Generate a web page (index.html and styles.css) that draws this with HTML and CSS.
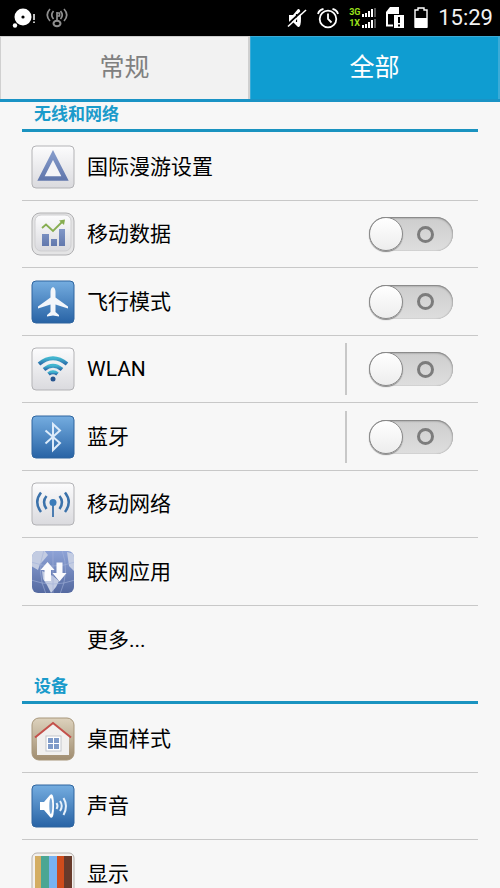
FILE: index.html
```html
<!DOCTYPE html>
<html lang="zh-CN">

<head>
  <meta charset="utf-8">
  <meta name="viewport" content="width=device-width, initial-scale=1">
  <title>设置</title>
  <link rel="stylesheet" href="styles.css">
</head>

<body>
  <!-- shared gradients -->
  <svg class="defs" width="0" height="0" aria-hidden="true">
    <defs>
      <linearGradient id="light" x1="0" y1="0" x2="0" y2="1">
        <stop offset="0" stop-color="#fcfcfd" />
        <stop offset="1" stop-color="#dadade" />
      </linearGradient>
      <linearGradient id="blue" x1="0" y1="0" x2="0" y2="1">
        <stop offset="0" stop-color="#75ade0" />
        <stop offset="1" stop-color="#2863a5" />
      </linearGradient>
      <linearGradient id="slate" x1="0" y1="0" x2="0" y2="1">
        <stop offset="0" stop-color="#8298c8" />
        <stop offset="1" stop-color="#6278ad" />
      </linearGradient>
      <linearGradient id="wave" x1="0" y1="0" x2="0" y2="1">
        <stop offset="0" stop-color="#42b5cf" />
        <stop offset="1" stop-color="#2c6fac" />
      </linearGradient>
      <linearGradient id="sand" x1="0" y1="0" x2="0" y2="1">
        <stop offset="0" stop-color="#ddd2bd" />
        <stop offset="1" stop-color="#a08d70" />
      </linearGradient>
      <linearGradient id="globe" x1="0" y1="0" x2="0" y2="1">
        <stop offset="0" stop-color="#8fa4d8" />
        <stop offset="1" stop-color="#53689f" />
      </linearGradient>
      <clipPath id="tile"><rect x="1" y="1" width="42" height="42" rx="6" /></clipPath>
    </defs>
  </svg>

  <div class="screen">
    <header class="status">
      <div class="status-group">
        <svg width="24" height="22" viewBox="0 0 24 22">
          <circle cx="11" cy="10" r="8.500" fill="#fff" />
          <circle cx="11" cy="10" r="1.600" fill="#000" />
          <circle cx="3" cy="18.500" r="2.200" fill="#fff" />
          <path d="M22 7V13M22 14.500V16" stroke="#fff" stroke-width="1.500" />
        </svg>
        <svg width="22" height="22" viewBox="0 0 22 22" fill="none" stroke="#8f8f8f" stroke-width="1.700">
          <path d="M4 2Q-1.500 8 4 14M7.500 4Q4 8 7.500 12M18 2Q23.500 8 18 14M14.500 4Q18 8 14.500 12" />
          <path d="M11 13.500V5M11 6H13.500V9H11" />
          <ellipse cx="11" cy="16.500" rx="3.500" ry="2.800" stroke-width="2" />
        </svg>
      </div>
      <div class="status-group">
        <svg width="20" height="22" viewBox="0 0 20 22">
          <path d="M2 8H6L11 2Q14 1 14 11Q14 21 11 20L6 15H2Z" fill="#fff" />
          <path d="M9.500 7V15" stroke="#000" stroke-width="1.200" />
          <path d="M0 18L17.500 2" stroke="#000" stroke-width="2" />
          <path d="M1 19.500L19 3" stroke="#fff" stroke-width="1.600" />
        </svg>
        <svg width="22" height="22" viewBox="0 0 22 22" fill="none" stroke="#fff" stroke-width="1.800">
          <circle cx="11" cy="12" r="8.300" />
          <path d="M11 6.500V12L14.500 15.500M1 7Q2 3 6.500 2M21 7Q20 3 15.500 2" />
        </svg>
        <div class="signal">
          <span>3G</span>
          <svg width="14" height="9" viewBox="0 0 14 9">
            <path d="M0 6H2V9H0ZM3 5H5V9H3ZM6 3H8V9H6ZM9 1H11V9H9Z" fill="#fff" />
            <path d="M12 0H14V9H12Z" fill="#555" />
          </svg>
          <span>1X</span>
          <svg width="14" height="9" viewBox="0 0 14 9">
            <path d="M0 6H2V9H0ZM3 5H5V9H3ZM6 3H8V9H6ZM9 1H11V9H9Z" fill="#fff" />
            <path d="M12 0H14V9H12Z" fill="#555" />
          </svg>
        </div>
        <svg width="18" height="22" viewBox="0 0 18 22">
          <path d="M7 18.500H1V5" fill="none" stroke="#fff" stroke-width="2" />
          <path d="M0 5L4 0H13V7H0Z" fill="#fff" />
          <rect x="8" y="8" width="10" height="13" fill="#fff" />
          <path d="M13 10V16M13 17.500V19.500" stroke="#000" stroke-width="2" />
        </svg>
        <svg width="14" height="22" viewBox="0 0 14 22">
          <path d="M1 20V3H4V1H10V3H13V20Z" fill="none" stroke="#fff" stroke-width="1.400" />
          <rect x="1" y="11" width="12" height="10" fill="#fff" />
        </svg>
        <time class="clock">15:29</time>
      </div>
    </header>

    <nav class="tabs">
      <button type="button" class="tab">常规</button>
      <button type="button" class="tab active">全部</button>
    </nav>

    <main class="settings">
      <section>
        <h2>无线和网络</h2>
        <ul>
          <li>
            <svg class="icon" viewBox="0 0 44 44">
              <rect x="1" y="1" width="42" height="42" rx="4" fill="url(#light)" stroke="#b3b3b6" />
              <path d="M22 10L34 33.500H10Z" fill="#f4f4f7" stroke="url(#slate)" stroke-width="4.500" />
            </svg>
            <span class="label">国际漫游设置</span>
          </li>
          <li>
            <svg class="icon" viewBox="0 0 44 44">
              <rect x="1" y="1" width="42" height="42" rx="8" fill="#e4e4e5" stroke="#b0b0b2" />
              <rect x="4" y="3" width="36" height="36" rx="6" fill="url(#light)" stroke="#cfcfd1" />
              <path d="M11 22H18V34H11ZM20 27H26V34H20ZM28 17H34V34H28Z" fill="url(#slate)" />
              <path d="M11 16L15 12.500L22 19L31 10" fill="none" stroke="#86ad50" stroke-width="1.800" />
              <path d="M28 8.500L34 7.500L33 13Z" fill="#86ad50" />
            </svg>
            <label class="label" for="data">移动数据</label>
            <input type="checkbox" class="switch" id="data">
          </li>
          <li>
            <svg class="icon" viewBox="0 0 44 44">
              <rect x="1" y="1" width="42" height="42" rx="4" fill="url(#blue)" stroke="#2f659f" />
              <path d="M22 7Q24.500 8 24.500 12V17.500L37 26.500V28.500L24.500 24.500V32L28 35V36.500L22 35.500L16 36.500V35L19.500 32V24.500L7 28.500V26.500L19.500 17.500V12Q19.500 8 22 7Z" fill="#f3f6fa" />
            </svg>
            <label class="label" for="plane">飞行模式</label>
            <input type="checkbox" class="switch" id="plane">
          </li>
          <li>
            <svg class="icon" viewBox="0 0 44 44">
              <rect x="1" y="1" width="42" height="42" rx="4" fill="url(#light)" stroke="#b3b3b6" />
              <g fill="none" stroke="url(#wave)" stroke-width="4">
                <path d="M8 17Q22 5.500 36 17" />
                <path d="M13 22.500Q22 15 31 22.500" />
                <path d="M17.500 27Q22 23.500 26.500 27" />
              </g>
              <circle cx="22" cy="32" r="2.500" fill="#27558f" />
            </svg>
            <label class="label" for="wlan">WLAN</label>
            <span class="divider"></span>
            <input type="checkbox" class="switch" id="wlan">
          </li>
          <li>
            <svg class="icon" viewBox="0 0 44 44">
              <rect x="1" y="1" width="42" height="42" rx="4" fill="url(#blue)" stroke="#2f659f" />
              <path d="M14.500 15.500L29 28L22 35V9L29 15.500L14.500 28.500" fill="none" stroke="#dcebfa" stroke-width="2" />
            </svg>
            <label class="label" for="bluetooth">蓝牙</label>
            <span class="divider"></span>
            <input type="checkbox" class="switch" id="bluetooth">
          </li>
          <li>
            <svg class="icon" viewBox="0 0 44 44">
              <rect x="1" y="1" width="42" height="42" rx="4" fill="url(#light)" stroke="#b3b3b6" />
              <g fill="none" stroke="#3b72ab" stroke-width="2.500">
                <path d="M15.500 14Q10.500 20 15.500 27M28.500 14Q33.500 20 28.500 27" />
                <path d="M10 10.500Q2.500 20 10 30M34 10.500Q41.500 20 34 30" />
                <path d="M22 21V35" stroke-width="1.800" />
              </g>
              <circle cx="22" cy="20.500" r="3.500" fill="#3b7cba" />
            </svg>
            <span class="label">移动网络</span>
          </li>
          <li>
            <svg class="icon" viewBox="0 0 44 44">
              <g clip-path="url(#tile)">
                <rect x="0" y="0" width="44" height="44" fill="url(#globe)" />
                <path d="M0 0H13L17 5L12 11L9 14L7 20L0 16ZM36 2L44 4V22L38 16ZM11 21L22 26L28 31L25 37L20 43L16 35L12 29Z" fill="#c3cce2" />
                <path d="M22 0V44M13 0Q5 22 15 44M31 0Q39 22 29 44M0 12Q22 20 44 12M0 30Q22 38 44 30" fill="none" stroke="#a4b2d8" stroke-width="1" opacity=".6" />
              </g>
              <path d="M16.500 12L23.500 20H20V31H13.500V20H9.500ZM25.500 12.500H31.500V23H35.500L28.500 31.500L21.500 23H25.500Z" fill="#fbfbfd" />
            </svg>
            <span class="label">联网应用</span>
          </li>
          <li>
            <span class="icon"></span>
            <span class="label">更多...</span>
          </li>
        </ul>
      </section>

      <section>
        <h2>设备</h2>
        <ul>
          <li>
            <svg class="icon" viewBox="0 0 44 44">
              <rect x="1" y="1" width="42" height="42" rx="7" fill="url(#sand)" stroke="#a7967a" />
              <path d="M6 19L22 6L38 19V38H6Z" fill="#f1f0ef" />
              <path d="M4 20.500L22 6L40 20.500" fill="none" stroke="#c4504b" stroke-width="2" />
              <rect x="15" y="19" width="15" height="15" fill="#fff" stroke="#c4c6cc" />
              <path d="M17 21H22V26H17ZM23 21H28V26H23ZM17 27H22V32H17ZM23 27H28V32H23Z" fill="#7f9bc9" />
            </svg>
            <span class="label">桌面样式</span>
          </li>
          <li>
            <svg class="icon" viewBox="0 0 44 44">
              <rect x="1" y="1" width="42" height="42" rx="4" fill="url(#blue)" stroke="#2f659f" />
              <path d="M9 18H13L19 11Q23 7 23 22Q23 37 19 33L13 26H9Z" fill="#fff" />
              <ellipse cx="19.800" cy="22" rx="1.500" ry="8" fill="#74a4d5" />
              <path d="M25.500 19Q27.500 22 25.500 25M29 17Q32.500 22 29 27M32.500 14Q37.500 22 32.500 31" fill="none" stroke="#e5f0fb" stroke-width="2" />
            </svg>
            <span class="label">声音</span>
          </li>
          <li>
            <svg class="icon" viewBox="0 0 44 44">
              <rect x="1" y="1" width="42" height="42" rx="5" fill="#f3f0ed" stroke="#b5b0ac" />
              <path d="M4 4H10V41H4Z" fill="#d4ad62" />
              <path d="M10 4H18V41H10Z" fill="#4ba693" />
              <path d="M18 4H26V41H18Z" fill="#78b2f0" />
              <path d="M26 4H33V41H26Z" fill="#cf4c1c" />
              <path d="M33 4H41V41H33Z" fill="#673a2b" />
            </svg>
            <span class="label">显示</span>
          </li>
        </ul>
      </section>
    </main>
  </div>
</body>

</html>
```

FILE: styles.css
```css
*,
*::before,
*::after {
  box-sizing: border-box;
}

body {
  margin: 0;
  background-color: #f7f7f7;
  font-family: Roboto, "Noto Sans CJK SC", sans-serif;
  color: #000;
}

.defs {
  position: absolute;
}

.screen {
  display: flex;
  flex-direction: column;
  height: 100vh;
}

/* status bar */
.status {
  display: flex;
  justify-content: space-between;
  align-items: center;
  flex: none;
  height: 36px;
  padding: 0 7px 0 12px;
  background-color: #000;
}

.status-group {
  display: flex;
  align-items: center;
  gap: 10px;
}

.signal {
  display: grid;
  grid-template-columns: 13px 14px;
  align-items: center;
  color: #9be11b;
  font-size: 9px;
  font-weight: bold;
  line-height: 11px;
}

.clock {
  color: #f2f2f2;
  font-size: 22px;
  line-height: 36px;
}

/* tabs */
.tabs {
  display: flex;
  flex: none;
  height: 66px;
  border-bottom: 3px solid #1a93c5;
}

.tab {
  flex: 1;
  padding: 0;
  border: 1px solid #d0d0d0;
  border-width: 1px 2px 0 1px;
  background-color: #f2f2f2;
  color: #808080;
  font-family: inherit;
  font-size: 25px;
  line-height: 30px;
}

.tab.active {
  border-color: #3babd7;
  background-color: #0f9dd1;
  color: #fff;
}

/* list */
.settings {
  flex: 1;
  overflow-y: auto;
  scrollbar-width: none;
  padding: 0 22px;
}

h2 {
  height: 30px;
  margin: 0;
  padding-left: 12px;
  border-bottom: 3px solid #1a93c0;
  color: #1a9bcb;
  font-size: 17px;
  line-height: 24px;
}

ul {
  margin: 0;
  padding: 1px 0;
  list-style: none;
}

li {
  display: flex;
  align-items: center;
  gap: 12px;
  height: 68px;
  padding: 0 25px 0 9px;
  border-bottom: 1px solid #c8c8c8;
}

li:nth-child(even) {
  height: 67px;
}

li:last-child {
  border-bottom: 0;
}

.icon {
  flex: none;
  width: 44px;
  height: 44px;
}

.label {
  flex: 1;
  font-size: 21px;
  line-height: 28px;
}

.divider {
  width: 2px;
  height: 52px;
  margin-right: 10px;
  background-color: #c8c8c8;
}

/* on/off switch */
.switch {
  appearance: none;
  display: flex;
  align-items: center;
  gap: 14px;
  width: 84px;
  height: 34px;
  margin: 0;
  border-radius: 17px;
  background: linear-gradient(#cdcdcd, #dedede);
  box-shadow: inset 0 1px 2px #777, inset 0 0 1px #999;
}

.switch::before {
  content: "";
  width: 34px;
  height: 34px;
  border: 1px solid #8a8a8a;
  border-radius: 50%;
  background: linear-gradient(#fff, #ededed);
  box-shadow: 0 1px 1px #888;
}

.switch::after {
  content: "";
  width: 17px;
  height: 17px;
  border: 3px solid #7c7c7c;
  border-radius: 50%;
}

.switch:checked {
  flex-direction: row-reverse;
  background: #1a9bcb;
}
```
